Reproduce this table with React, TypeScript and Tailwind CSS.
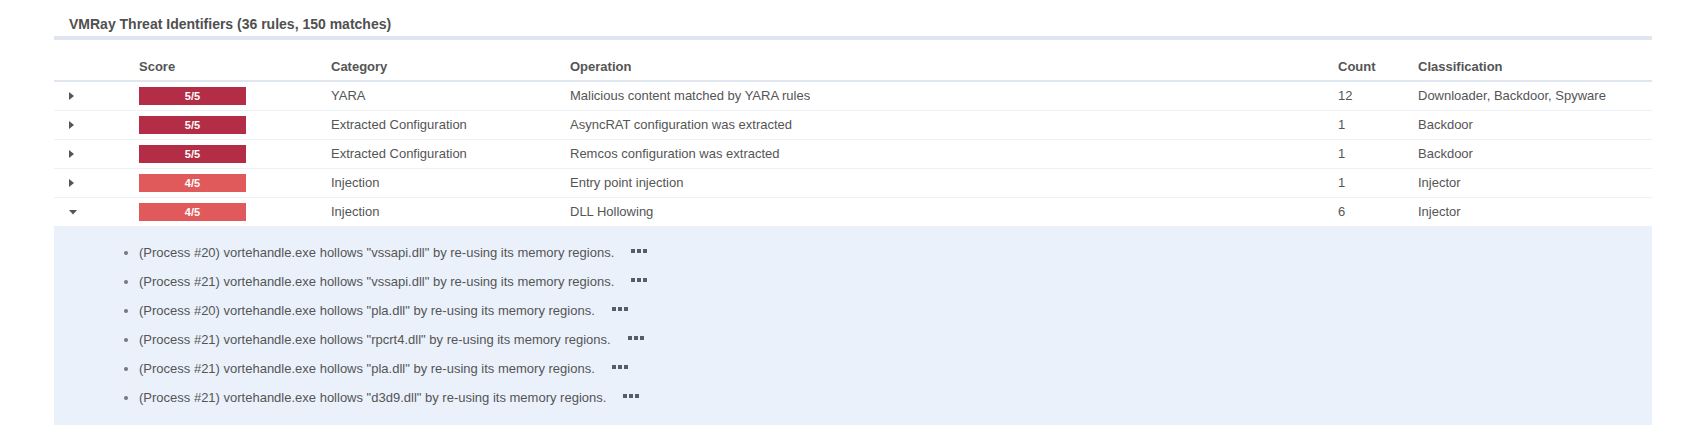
import React from "react";

type Row = {
  score: string;
  level: "high" | "mid";
  category: string;
  operation: string;
  count: string;
  classification: string;
  open?: boolean;
};

const rows: Row[] = [
  { score: "5/5", level: "high", category: "YARA", operation: "Malicious content matched by YARA rules", count: "12", classification: "Downloader, Backdoor, Spyware" },
  { score: "5/5", level: "high", category: "Extracted Configuration", operation: "AsyncRAT configuration was extracted", count: "1", classification: "Backdoor" },
  { score: "5/5", level: "high", category: "Extracted Configuration", operation: "Remcos configuration was extracted", count: "1", classification: "Backdoor" },
  { score: "4/5", level: "mid", category: "Injection", operation: "Entry point injection", count: "1", classification: "Injector" },
  { score: "4/5", level: "mid", category: "Injection", operation: "DLL Hollowing", count: "6", classification: "Injector", open: true },
];

const details = [
  '(Process #20) vortehandle.exe hollows "vssapi.dll" by re-using its memory regions.',
  '(Process #21) vortehandle.exe hollows "vssapi.dll" by re-using its memory regions.',
  '(Process #20) vortehandle.exe hollows "pla.dll" by re-using its memory regions.',
  '(Process #21) vortehandle.exe hollows "rpcrt4.dll" by re-using its memory regions.',
  '(Process #21) vortehandle.exe hollows "pla.dll" by re-using its memory regions.',
  '(Process #21) vortehandle.exe hollows "d3d9.dll" by re-using its memory regions.',
];

const cols = "grid grid-cols-[85px_192px_239px_768px_80px_1fr]";

function Arrow({ open }: { open?: boolean }) {
  if (open) {
    return (
      <svg width="8" height="5" viewBox="0 0 8 5" className="block">
        <polygon points="0,0 8,0 4,4.5" fill="#555" />
      </svg>
    );
  }
  return (
    <svg width="5" height="8" viewBox="0 0 5 8" className="block">
      <polygon points="0,0 5,4 0,8" fill="#555" />
    </svg>
  );
}

function Ellipsis() {
  return (
    <span className="ml-[17px] flex gap-[2px] -translate-y-[2px]">
      <span className="w-[4px] h-[4px] bg-[#555d68]" />
      <span className="w-[4px] h-[4px] bg-[#555d68]" />
      <span className="w-[4px] h-[4px] bg-[#555d68]" />
    </span>
  );
}

export default function App() {
  return (
    <div
      className="w-[1684px] h-[426px] bg-white text-[#555] overflow-hidden"
      style={{ fontFamily: '"Liberation Sans", Arial, sans-serif' }}
    >
      <div className="ml-[54px] w-[1598px]">
        <div className="pt-[14px] pb-[2px] border-b-4 border-[#dfe6f0]">
          <h2 className="pl-[15px] text-[14px] leading-[20px] font-bold text-[#505050]">
            VMRay Threat Identifiers (36 rules, 150 matches)
          </h2>
        </div>

        <div className={`${cols} mt-[14px] h-[28px] items-center border-b-2 border-[#dfe6f0] text-[13px] font-bold`}>
          <div />
          <div>Score</div>
          <div>Category</div>
          <div>Operation</div>
          <div>Count</div>
          <div>Classification</div>
        </div>

        {rows.map((r, i) => (
          <div
            key={i}
            className={`${cols} items-center text-[13px] ${r.open ? "h-[28px]" : "h-[29px] border-b border-[#eef1f6]"}`}
          >
            <div className="pl-[15px] flex items-center">
              <Arrow open={r.open} />
            </div>
            <div>
              <div
                className={`w-[107px] h-[18px] flex items-center justify-center text-white text-[11px] font-bold ${
                  r.level === "high" ? "bg-[#b22d45]" : "bg-[#e05a5b]"
                }`}
              >
                {r.score}
              </div>
            </div>
            <div>{r.category}</div>
            <div>{r.operation}</div>
            <div>{r.count}</div>
            <div>{r.classification}</div>
          </div>
        ))}

        <div className="bg-[#eaf1fb] pt-[12px] pb-[13px]">
          {details.map((d, i) => (
            <div key={i} className="h-[29px] flex items-center pl-[70px] text-[13px]">
              <span className="w-[4px] h-[4px] rounded-full bg-[#777]" />
              <span className="ml-[11px]">{d}</span>
              <Ellipsis />
            </div>
          ))}
        </div>
      </div>
    </div>
  );
}
